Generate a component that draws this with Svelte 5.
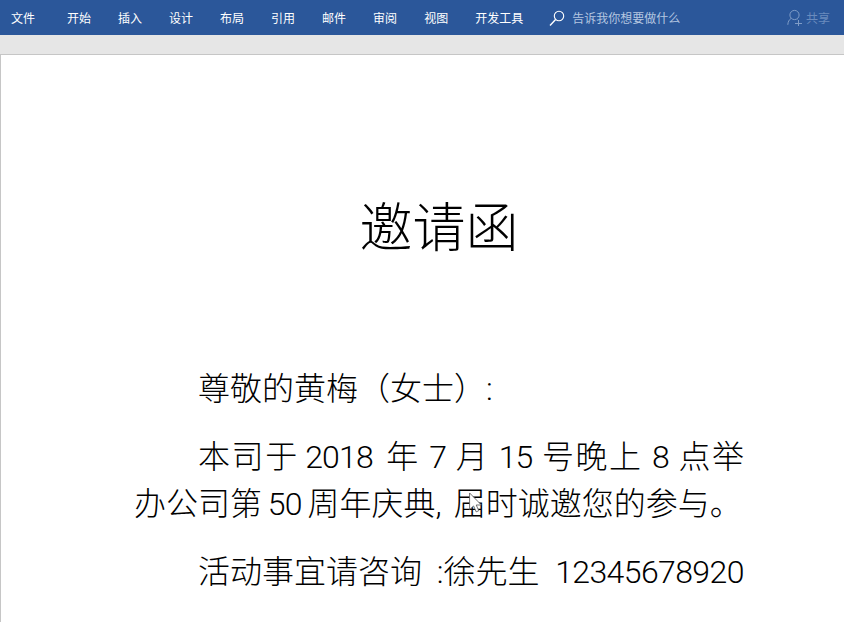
<script>
  const tabs = ['开始', '插入', '设计', '布局', '引用', '邮件', '审阅', '视图', '开发工具'];
</script>

<div class="app">
  <header class="ribbon">
    <span class="file">文件</span>
    <nav class="tabs">
      {#each tabs as tab}
        <span>{tab}</span>
      {/each}
    </nav>
    <div class="search">
      <svg width="16" height="17" viewBox="0 0 16 17" fill="none" stroke="#fff" stroke-width="1.1">
        <circle cx="10" cy="7" r="4.7" />
        <path d="M6.6 10.5 1 16.5" stroke-width="1.4" />
      </svg>
      <span>告诉我你想要做什么</span>
    </div>
    <div class="share">
      <svg width="16" height="17" viewBox="0 0 16 17" fill="none" stroke="#7f9cc7" stroke-width="1">
        <circle cx="7.5" cy="6" r="4.6" />
        <path d="M4 9.5C2 10.8 1 12.8.8 15.8M10.5 10.2 11 10.6M8 14.5h7M11.5 11v7" />
      </svg>
      <span>共享</span>
    </div>
  </header>

  <div class="band"></div>

  <main class="page">
    <h1>邀请函</h1>
    <p class="greeting">尊敬的黄梅（女士）:</p>
    <p>本司于 <span class="num year">2018</span> 年 <span class="num">7</span> 月 <span class="num">15</span> 号晚上 <span class="num">8</span> 点举办公司第 <span class="num tight">50</span> 周年庆典<span class="comma">,</span>届时诚邀您的参与。</p>
    <p class="contact">活动事宜请咨询 <span class="colon">:</span>徐先生 &nbsp;<span class="phone">12345678920</span></p>
    <svg class="cursor" width="13" height="22" viewBox="0 0 11 18">
      <path d="M.5.5v14l3.4-3 2.2 5 2.2-1-2.2-4.8h4.4z" fill="#fff" stroke="#555" stroke-width=".7" />
    </svg>
  </main>
</div>

<style>
  :global(body) {
    margin: 0;
    overflow: hidden;
  }

  .app {
    height: 622px;
    display: flex;
    flex-direction: column;
    font-family: "Noto Sans CJK SC", sans-serif;
    background: #e6e6e6;
  }

  .ribbon {
    height: 35px;
    flex: none;
    display: flex;
    align-items: center;
    padding: 0 14px 0 11px;
    background: #2b579a;
    color: #fff;
    font-size: 12px;
    box-sizing: border-box;
  }

  .file {
    margin-right: 32px;
  }

  .tabs {
    display: flex;
    gap: 27px;
  }

  .search {
    display: flex;
    align-items: center;
    gap: 7px;
    margin-left: 26px;
    color: #b4c6e0;
  }

  .share {
    display: flex;
    align-items: center;
    gap: 3px;
    margin-left: auto;
    color: #6a8bbd;
  }

  .band {
    height: 19px;
    flex: none;
    border-bottom: 1px solid #c6c6c6;
  }

  .page {
    flex: 1;
    position: relative;
    background: #fff;
    border-left: 1px solid #c6c6c6;
    padding: 0 100px 0 133px;
    color: #000;
    font-family: Roboto, "Noto Sans CJK SC", sans-serif;
    font-weight: 300;
    font-size: 32px;
    line-height: 47px;
  }

  h1 {
    margin: 141px 0 0;
    text-align: center;
    font-size: 53px;
    font-weight: 300;
    line-height: 66px;
  }

  p {
    margin: 21px 0 0;
    text-indent: 64px;
    text-align: justify;
  }

  .greeting {
    margin-top: 104px;
  }

  .contact {
    white-space: nowrap;
    text-align: left;
  }

  .num {
    letter-spacing: -0.8px;
  }

  .year {
    margin: 0 4px 0 -3px;
  }

  .tight {
    margin: 0 -2px;
  }

  .comma {
    margin-right: 12px;
  }

  .colon {
    margin-left: 7px;
  }

  .phone {
    letter-spacing: -0.6px;
  }

  .cursor {
    position: absolute;
    left: 468px;
    top: 437px;
  }
</style>
